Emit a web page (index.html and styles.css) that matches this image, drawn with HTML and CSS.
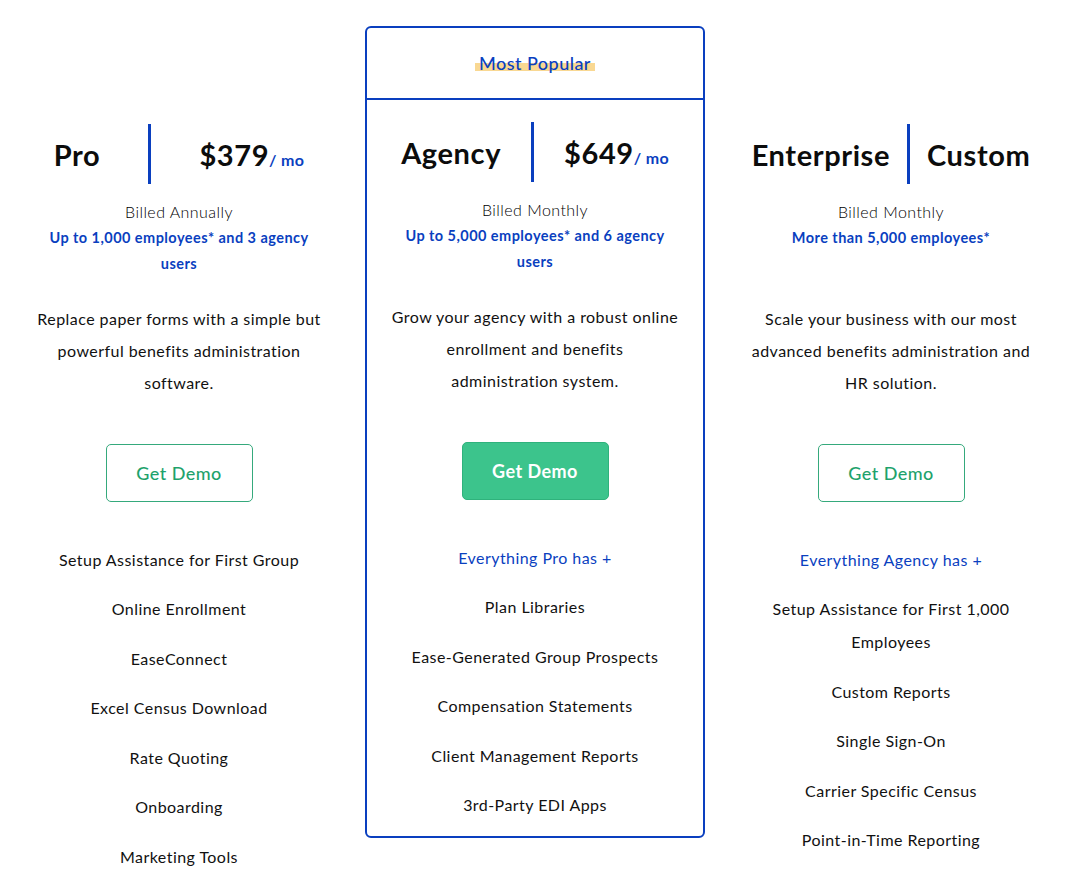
FILE: index.html
```html
<!DOCTYPE html>
<html lang="en">
<head>
    <meta charset="UTF-8">
    <meta name="viewport" content="width=device-width, initial-scale=1.0">
    <title>Pricing Plans</title>
    <link rel="stylesheet" href="styles.css">
</head>
<body>
    <main class="pricing">
        <section class="plan">
            <div class="plan-head plan-head--pro">
                <div class="plan-name">Pro</div>
                <div class="plan-rule"></div>
                <div class="plan-price">$379<span class="per">/ mo</span></div>
            </div>
            <div class="billed">Billed Annually</div>
            <div class="limit">Up to 1,000 employees* and 3 agency users</div>
            <p class="desc">Replace paper forms with a simple but powerful benefits administration software.</p>
            <a class="btn" href="#">Get Demo</a>
            <ul class="features">
                <li>Setup Assistance for First Group</li>
                <li>Online Enrollment</li>
                <li>EaseConnect</li>
                <li>Excel Census Download</li>
                <li>Rate Quoting</li>
                <li>Onboarding</li>
                <li>Marketing Tools</li>
            </ul>
        </section>

        <section class="plan plan--featured">
            <div class="badge"><span class="badge-text">Most Popular</span></div>
            <div class="plan-body">
                <div class="plan-head plan-head--agency">
                    <div class="plan-name">Agency</div>
                    <div class="plan-rule"></div>
                    <div class="plan-price">$649<span class="per">/ mo</span></div>
                </div>
                <div class="billed">Billed Monthly</div>
                <div class="limit">Up to 5,000 employees* and 6 agency users</div>
                <p class="desc">Grow your agency with a robust online<br>enrollment and benefits<br>administration system.</p>
                <a class="btn btn--solid" href="#">Get Demo</a>
                <ul class="features">
                    <li class="features-lead">Everything Pro has +</li>
                    <li>Plan Libraries</li>
                    <li>Ease-Generated Group Prospects</li>
                    <li>Compensation Statements</li>
                    <li>Client Management Reports</li>
                    <li>3rd-Party EDI Apps</li>
                </ul>
            </div>
        </section>

        <section class="plan">
            <div class="plan-head plan-head--enterprise">
                <div class="plan-name">Enterprise</div>
                <div class="plan-rule"></div>
                <div class="plan-price">Custom</div>
            </div>
            <div class="billed">Billed Monthly</div>
            <div class="limit">More than 5,000 employees*</div>
            <p class="desc">Scale your business with our most advanced benefits administration and HR solution.</p>
            <a class="btn" href="#">Get Demo</a>
            <ul class="features">
                <li class="features-lead">Everything Agency has +</li>
                <li>Setup Assistance for First 1,000 Employees</li>
                <li>Custom Reports</li>
                <li>Single Sign-On</li>
                <li>Carrier Specific Census</li>
                <li>Point-in-Time Reporting</li>
            </ul>
        </section>
    </main>
</body>
</html>
```

FILE: styles.css
```css
:root {
    --blue: #0a3fbf;
    --green: #1ea26c;
    --green-fill: #3cc48c;
    --text: #111111;
}
body {
    margin: 0;
    font-family: 'Lato', 'Open Sans', sans-serif;
    color: var(--text);
    background: #ffffff;
    letter-spacing: 0.45px;
}
.pricing {
    display: grid;
    grid-template-columns: 340px 340px 340px;
    column-gap: 16px;
    align-items: start;
    padding: 26px 0 0 9px;
}
.plan {
    padding-top: 98px;
    text-align: center;
}
.plan--featured {
    padding-top: 0;
    border: 2px solid var(--blue);
    border-radius: 6px;
}
.badge {
    height: 70px;
    display: flex;
    align-items: center;
    justify-content: center;
    border-bottom: 2px solid var(--blue);
}
.badge-text {
    font-size: 18px;
    font-weight: 500;
    color: var(--blue);
    padding: 0 4px;
    background: linear-gradient(to bottom, transparent 50%, #f9d892 50%, #f9d892 88%, transparent 88%);
}
.plan-body {
    padding: 22px 0 15px;
}
.plan-head {
    display: flex;
    justify-content: center;
    align-items: center;
    height: 60px;
    gap: 48px;
}
.plan-head--agency {
    gap: 30px;
}
.plan-head--enterprise {
    gap: 17px;
}
.plan-rule {
    width: 3px;
    align-self: stretch;
    background: var(--blue);
}
.plan-name,
.plan-price {
    font-size: 29px;
    font-weight: 700;
    letter-spacing: 0.6px;
    color: #0c0c0c;
}
.per {
    font-size: 16px;
    letter-spacing: 0.3px;
    color: var(--blue);
}
.billed {
    margin-top: 15px;
    font-size: 16px;
    font-weight: 300;
    line-height: 26px;
    color: #000;
}
.limit {
    font-size: 14.5px;
    font-weight: 700;
    line-height: 26px;
    min-height: 52px;
    color: var(--blue);
    padding: 0 30px;
}
.desc {
    max-width: 290px;
    margin: 26px auto 0;
    font-size: 16px;
    line-height: 32px;
}
.btn {
    display: flex;
    align-items: center;
    justify-content: center;
    box-sizing: border-box;
    width: 147px;
    height: 58px;
    margin: 45px auto 0;
    border: 1px solid #35a97c;
    border-radius: 5px;
    font-size: 18px;
    font-weight: 500;
    color: var(--green);
    text-decoration: none;
}
.btn--solid {
    background: var(--green-fill);
    border-color: #2fb27c;
    color: #ffffff;
    font-weight: 700;
}
.features {
    list-style: none;
    margin: 0;
    padding: 24px 30px 0;
}
.features li {
    margin-top: 16.5px;
    font-size: 16px;
    line-height: 33px;
}
.features-lead {
    color: var(--blue);
}
```
